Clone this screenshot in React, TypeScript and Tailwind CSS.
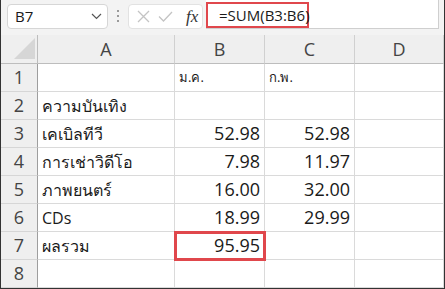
import React from "react"

const font = { fontFamily: '"Open Sans", "Noto Sans", "DejaVu Sans", sans-serif' }

const rows: [string, string, string][] = [
    ["", "ม.ค.", "ก.พ."],
    ["ความบันเทิง", "", ""],
    ["เคเบิลทีวี", "52.98", "52.98"],
    ["การเช่าวิดีโอ", "7.98", "11.97"],
    ["ภาพยนตร์", "16.00", "32.00"],
    ["CDs", "18.99", "29.99"],
    ["ผลรวม", "95.95", ""],
    ["", "", ""],
]

function Cell({ value, row }: { value: string; row: number }) {
    const isNum = /^[0-9.]+$/.test(value)
    const small = row === 0
    return (
        <div
            className={
                "h-[28px] border-r border-b border-[#dadada] flex items-center overflow-hidden whitespace-nowrap " +
                (isNum ? "justify-end pr-[4px] text-[18px] " : "justify-start pl-[4px] ") +
                (small ? "text-[13px] " : isNum ? "" : "text-[16px] ")
            }
        >
            {value}
        </div>
    )
}

export default function App() {
    return (
        <div className="w-[445px] h-[289px] bg-[#f3f3f3] text-[#1a1a1a] border-l border-r border-b border-[#333] overflow-hidden" style={font}>
            {/* Formula bar */}
            <div className="h-[35px] flex items-start">
                <div className="mt-[4px] ml-[6px] w-[101px] h-[25px] bg-white border border-[#d6d6d6] rounded-[4px] flex items-center justify-between pl-[7px] pr-[5px]">
                    <span className="text-[15px]">B7</span>
                    <svg width="11" height="7" viewBox="0 0 11 7" fill="none" stroke="#555" strokeWidth="1.2">
                        <path d="M1 1l4.5 4.5L10 1" />
                    </svg>
                </div>
                <div className="mt-[10px] ml-[9px] flex flex-col gap-[3px]">
                    <span className="w-[2px] h-[2px] bg-[#9a9a9a]" />
                    <span className="w-[2px] h-[2px] bg-[#9a9a9a]" />
                    <span className="w-[2px] h-[2px] bg-[#9a9a9a]" />
                </div>
                <div className="mt-[4px] ml-[9px] w-[75px] h-[25px] bg-white border border-[#e2e2e2] rounded-[4px] flex items-center pl-[8px] gap-[8px]">
                    <svg width="13" height="13" viewBox="0 0 13 13" fill="none" stroke="#c4c4c4" strokeWidth="1.3">
                        <path d="M1 1l11 11M12 1L1 12" />
                    </svg>
                    <svg width="15" height="11" viewBox="0 0 15 11" fill="none" stroke="#c4c4c4" strokeWidth="1.3">
                        <path d="M1 5.5l4.5 4.5L14 1" />
                    </svg>
                    <span className="ml-[5px] text-[17px] italic text-[#333]" style={{ fontFamily: '"Liberation Serif", serif' }}>fx</span>
                </div>
                <div className="ml-[3px] flex-1 h-[29px] bg-white border-r border-b border-[#cfcfcf] mr-[5px] flex items-end">
                    <div className="mt-[3px] h-[26px] w-[103px] border-2 border-[#e0474c] flex items-center pl-[11px] text-[15px] whitespace-nowrap">
                        =SUM(B3:B6)
                    </div>
                </div>
            </div>

            {/* Grid */}
            <div className="grid grid-cols-[37px_137px_90px_90px_1fr] bg-white">
                {/* Header row */}
                <div className="h-[29px] bg-[#efefef] border-r border-b border-[#bdbdbd] flex items-end justify-end pr-[2px] pb-[4px]">
                    <svg width="21" height="21" viewBox="0 0 21 21">
                        <path d="M21 0V21H0Z" fill="#d6d6d6" />
                    </svg>
                </div>
                {["A", "B", "C", "D"].map((c) => (
                    <div key={c} className="h-[29px] bg-[#efefef] border-r border-b border-[#d0d0d0] border-b-[#bdbdbd] flex items-center justify-center text-[18px] text-[#444]">
                        {c}
                    </div>
                ))}

                {rows.map((r, i) => (
                    <React.Fragment key={i}>
                        <div className="h-[28px] bg-[#efefef] border-r border-b border-r-[#9e9e9e] border-b-[#d6d6d6] flex items-center justify-center text-[18px] text-[#444]">
                            {i + 1}
                        </div>
                        <Cell value={r[0]} row={i} />
                        {i === 6 ? (
                            <div className="relative">
                                <Cell value={r[1]} row={i} />
                                <div className="absolute -left-[1px] -top-[1px] w-[92px] h-[30px] border-[3px] border-[#e0474c]" />
                            </div>
                        ) : (
                            <Cell value={r[1]} row={i} />
                        )}
                        <Cell value={r[2]} row={i} />
                        <Cell value="" row={i} />
                    </React.Fragment>
                ))}
            </div>
        </div>
    )
}
